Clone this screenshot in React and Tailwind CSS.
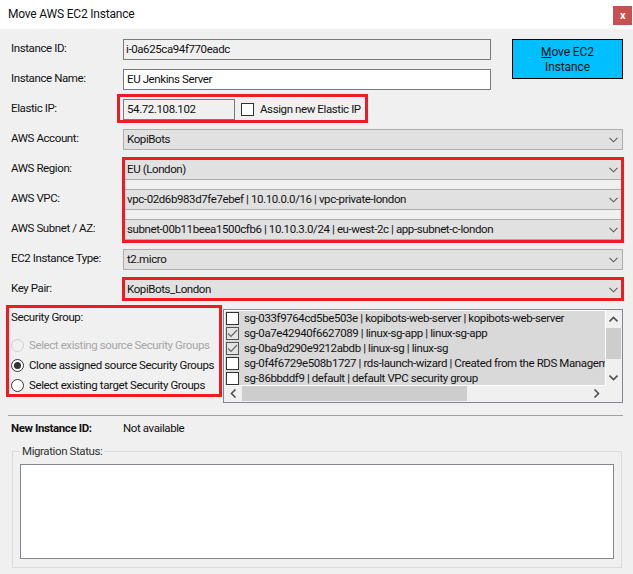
const font = { fontFamily: 'Roboto, sans-serif' };

const Chevron = () => (
  <svg width="9" height="6" viewBox="0 0 9 6" fill="none" stroke="#5a5a5a" strokeWidth="1.1" className="shrink-0">
    <path d="M0.5 0.8 4.5 4.8 8.5 0.8" />
  </svg>
);

const Label = ({ children }) => <div className="-mt-[2px] w-[112px] shrink-0 whitespace-nowrap text-[#111]">{children}</div>;

const RedBox = ({ className }) => <div className={"pointer-events-none absolute border-[3px] border-[#ed1c24] " + className} />;

const Combo = ({ value }) => (
  <div className="flex h-[21px] flex-1 items-center justify-between border border-[#adadad] bg-[#e1e1e1] pl-[3px] pr-[4px] text-[#111]">
    <span className="whitespace-nowrap">{value}</span>
    <Chevron />
  </div>
);

const Row = ({ label, children }) => (
  <div className="flex h-[21px] items-center">
    <Label>{label}</Label>
    {children}
  </div>
);

const Radio = ({ state, children }) => (
  <div className={"flex h-[20px] items-center gap-[5px] whitespace-nowrap " + (state === "off" ? "text-[#a6a6a6]" : "text-[#111]")}>
    <div className={"flex h-[13px] w-[13px] shrink-0 items-center justify-center rounded-full border " + (state === "off" ? "border-[#cfcfcf] bg-[#f0f0f0]" : "border-[#333] bg-white")}>
      {state === "on" && <div className="h-[7px] w-[7px] rounded-full bg-[#333]" />}
    </div>
    <span>{children}</span>
  </div>
);

const groups = [
  ["sg-033f9764cd5be503e | kopibots-web-server | kopibots-web-server", false],
  ["sg-0a7e42940f6627089 | linux-sg-app | linux-sg-app", true],
  ["sg-0ba9d290e9212abdb | linux-sg | linux-sg", true],
  ["sg-0f4f6729e508b1727 | rds-launch-wizard | Created from the RDS Management Console", false],
  ["sg-86bbddf9 | default | default VPC security group", false],
];

const Arrow = ({ d }) => (
  <svg width="9" height="9" viewBox="0 0 9 9" fill="none" stroke="#505050" strokeWidth="1.6">
    <path d={d} />
  </svg>
);

export default function App() {
  return (
    <div className="h-[574px] w-[633px] overflow-hidden bg-[#f0f0f0] text-[11.5px] leading-[15px] tracking-[-0.4px]" style={font}>
      <div className="flex h-[29px] items-start justify-between bg-white pl-[8px] pr-[1px]">
        <span className="mt-[7px] text-[12px] tracking-[-0.2px] text-[#111]">Move AWS EC2 Instance</span>
        <div className="mt-[6px] flex h-[19px] w-[19px] items-center justify-center bg-[#c75050] text-[11px] font-bold leading-none text-white">x</div>
      </div>

      <div className="pl-[11px] pr-[10px] pt-[10px]">
        <div className="flex flex-col gap-[9px]">
          <div className="flex gap-[21px]">
            <div className="flex flex-1 flex-col gap-[9px]">
              <Row label="Instance ID:">
                <div className="flex h-[21px] flex-1 items-center border border-[#7a7a7a] bg-[#f0f0f0] pl-[2px] text-[#111]">i-0a625ca94f770eadc</div>
              </Row>
              <Row label="Instance Name:">
                <div className="flex h-[21px] flex-1 items-center border border-[#7a7a7a] bg-white pl-[3px] text-[#111]">EU Jenkins Server</div>
              </Row>
            </div>
            <div className="flex h-[40px] w-[111px] flex-col items-center justify-center border border-black bg-[#00bfff] pt-[1px] text-[12px] tracking-[-0.1px] text-[#111]">
              <span><span className="underline">M</span>ove EC2</span>
              <span>Instance</span>
            </div>
          </div>

          <Row label="Elastic IP:">
            <div className="relative flex h-[21px] w-[245px] items-center">
              <RedBox className="-left-[6px] -top-[5px] -bottom-[3px] right-0" />
              <div className="flex h-[21px] w-[112px] items-center border border-[#7a7a7a] bg-[#f0f0f0] pl-[3px] text-[#111]">54.72.108.102</div>
              <div className="ml-[6px] h-[13px] w-[13px] border border-[#333] bg-white" />
              <span className="ml-[6px] whitespace-nowrap text-[#111]">Assign new Elastic IP</span>
            </div>
          </Row>

          <Row label="AWS Account:"><Combo value="KopiBots" /></Row>

          <div className="relative flex flex-col gap-[9px]">
            <RedBox className="left-[111px] -right-[1px] -top-[2px] -bottom-[3px]" />
            <Row label="AWS Region:"><Combo value="EU (London)" /></Row>
            <Row label="AWS VPC:"><Combo value="vpc-02d6b983d7fe7ebef | 10.10.0.0/16 | vpc-private-london" /></Row>
            <Row label="AWS Subnet / AZ:"><Combo value="subnet-00b11beea1500cfb6 | 10.10.3.0/24 | eu-west-2c | app-subnet-c-london" /></Row>
          </div>

          <Row label="EC2 Instance Type:"><Combo value="t2.micro" /></Row>

          <div className="relative">
            <RedBox className="left-[111px] -right-[1px] -top-[2px] -bottom-[1px]" />
            <Row label="Key Pair:"><Combo value="KopiBots_London" /></Row>
          </div>
        </div>

        <div className="mt-[5px] flex items-start">
          <div className="-ml-[5px] h-[92px] w-[216px] shrink-0 border-[3px] border-[#ed1c24] pl-[2px] pt-[2px] text-[#111]">
            <div className="h-[25px]">Security Group:</div>
            <Radio state="off">Select existing source Security Groups</Radio>
            <Radio state="on">Clone assigned source Security Groups</Radio>
            <Radio state="normal">Select existing target Security Groups</Radio>
          </div>

          <div className="ml-[1px] mt-[4px] flex h-[94px] w-[400px] shrink-0 flex-col border border-[#828790] bg-[#f0f0f0]">
            <div className="flex h-[76px]">
              <div className="h-[76px] w-[382px] shrink-0 overflow-hidden border border-white bg-[#d9d9d9] text-[#111]">
                {groups.map(([text, checked]) => (
                  <div key={text} className="flex h-[15px] items-center whitespace-nowrap pl-[1px]">
                    <div className={"mr-[5px] flex h-[13px] w-[13px] shrink-0 items-center justify-center border " + (checked ? "border-[#555] bg-[#e4e4e4]" : "border-[#333] bg-white")}>
                      {checked && (
                        <svg width="11" height="11" viewBox="0 0 11 11" fill="none" stroke="#666" strokeWidth="1.2">
                          <path d="M1 5.5 4 8.5 10 2" />
                        </svg>
                      )}
                    </div>
                    <span>{text}</span>
                  </div>
                ))}
              </div>
              <div className="flex w-[15px] shrink-0 flex-col">
                <div className="flex h-[18px] items-center justify-center"><Arrow d="M0.5 6.5 4.5 2.5 8.5 6.5" /></div>
                <div className="h-[31px] bg-[#cdcdcd]" />
                <div className="flex-1" />
                <div className="flex h-[17px] items-center justify-center"><Arrow d="M0.5 2.5 4.5 6.5 8.5 2.5" /></div>
              </div>
            </div>
            <div className="flex h-[15px] items-center">
              <div className="flex w-[18px] items-center justify-center"><Arrow d="M6.5 0.5 2.5 4.5 6.5 8.5" /></div>
              <div className="h-full w-[225px] bg-[#cdcdcd]" />
              <div className="flex flex-1 items-center justify-end pr-[21px]"><Arrow d="M2.5 0.5 6.5 4.5 2.5 8.5" /></div>
            </div>
          </div>
        </div>

        <div className="-ml-[3px] mr-0 mt-[12px] h-[1px] bg-[#a0a0a0]" />
        <div className="mt-[5px] flex">
          <div className="w-[112px] font-bold text-[#111]">New Instance ID:</div>
          <div className="text-[#111]">Not available</div>
        </div>

        <div className="relative ml-[1px] mr-[1px] mt-[15px] h-[117px] border border-[#dcdcdc] px-[7px] pt-[12px]">
          <span className="absolute -top-[8px] left-[7px] bg-[#f0f0f0] px-[2px] text-[#333]">Migration Status:</span>
          <div className="h-[95px] border border-[#828790] bg-white" />
        </div>
      </div>
    </div>
  );
}
